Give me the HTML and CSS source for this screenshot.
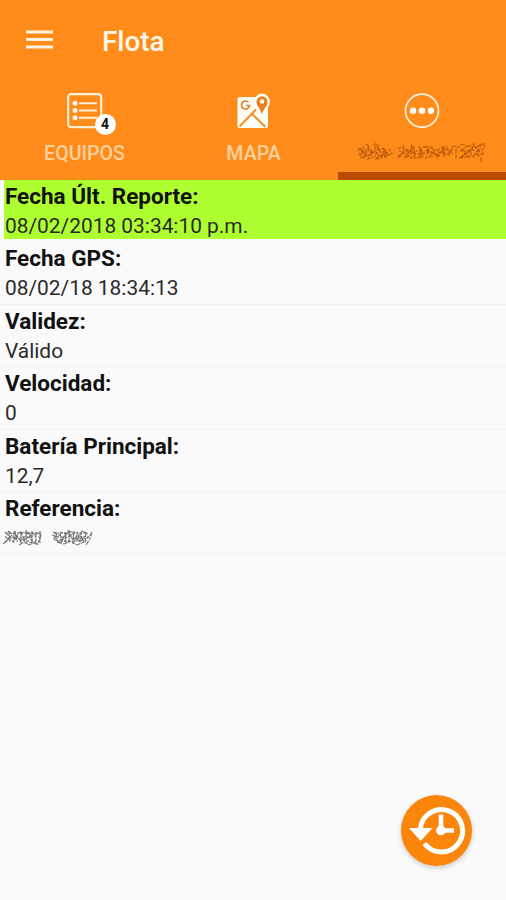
FILE: index.html
```html
<!DOCTYPE html>
<html lang="es">
<head>
  <meta charset="UTF-8">
  <meta name="viewport" content="width=device-width, initial-scale=1.0">
  <title>Flota</title>
  <link rel="stylesheet" href="styles.css">
</head>
<body>
  <header>
    <div class="toolbar">
      <svg class="menu" width="27" height="20" viewBox="0 0 27 20">
        <path d="M0 2h27M0 9.5h27M0 17h27" stroke="#fff5df" stroke-width="3.2"/>
      </svg>
      <h1>Flota</h1>
    </div>

    <nav class="tabs">
      <a class="tab">
        <span class="icon">
          <svg width="36" height="36" viewBox="0 0 36 36">
            <rect x="1.2" y="1.2" width="33" height="33" rx="3" fill="none" stroke="#fff0d4" stroke-width="2.2"/>
            <g fill="#fff5e2">
              <circle cx="8" cy="10.3" r="2.5"/>
              <circle cx="8" cy="17.5" r="2.5"/>
              <circle cx="8" cy="24.7" r="2.5"/>
            </g>
            <path d="M12 10.3h18M12 17.5h18M12 24.7h18" stroke="#fff0d4" stroke-width="2"/>
          </svg>
          <span class="badge">4</span>
        </span>
        <span class="tab-label">EQUIPOS</span>
      </a>
      <a class="tab">
        <span class="icon">
          <svg width="36" height="36" viewBox="0 0 36 36">
            <rect x="1.5" y="4" width="30.5" height="31" rx="2" fill="#fffdf5"/>
            <path d="M3.5 33.5L20 16.5M15.5 20.5L29.5 34" fill="none" stroke="#ee9030" stroke-width="2"/>
            <path d="M12.5 9.3a4 4 0 1 0 1 3.2H9.8" fill="none" stroke="#d8852e" stroke-width="1.7"/>
            <path d="M26 24C23 18 18.2 14.5 18.2 8.4a7.8 7.8 0 0 1 15.6 0C33.8 14.5 29 18 26 24z" fill="#fffdf5"/>
            <path d="M26 21.5C24.5 15.5 20.5 13.5 20.5 8.8a5.5 5.5 0 0 1 11 0C31.5 13.5 27.5 15.5 26 21.5z" fill="#e87f1c"/>
            <circle cx="26" cy="8.5" r="2.2" fill="#fffdf5"/>
          </svg>
        </span>
        <span class="tab-label">MAPA</span>
      </a>
      <a class="tab active">
        <span class="icon">
          <svg width="36" height="36" viewBox="0 0 36 36">
            <circle cx="18" cy="17.7" r="16.5" fill="none" stroke="#fff0d8" stroke-width="1.7"/>
            <circle cx="9" cy="17.7" r="3.2" fill="#fff"/>
            <circle cx="18" cy="17.7" r="3.2" fill="#fff"/>
            <circle cx="27" cy="17.7" r="3.2" fill="#fff"/>
          </svg>
        </span>
        <!-- nombre del equipo tachado -->
        <svg class="scribble-tab" width="132" height="26" viewBox="0 0 132 26">
          <g fill="none" stroke="#b95208" stroke-width="1.3" stroke-dasharray="5 1.3 3 1" opacity="0.75">
            <path d="M2 12l5-4 3 5-6 3 4 3 5-8-1-4 5 7-5 6 7-2 3-9 3 4-5 7 6-1 2-9 3 9-6-2M10 5l3 2M24 7l-4-2 6 11 4-6"/>
            <path d="M5 10l4 8M14 15l6-6M21 19l9-5M27 9l5 8 4-3-3-4M4 19l10-3M18 5l2 4"/>
            <path d="M42 10l6-3-2 9-4 3 8-9 4 2-4 7 6-5 1-6 3 8-6 3 9 0 2-10 2 9-5 1"/>
            <path d="M68 8l7 0-4 5 6 4-7 2 4-10M76 8l5 10 2-8-7 3 6 4 6-9 0 9 5-3-2-6-5 4 7 4 4-9-3 9M96 7l7 1-3 2 0 9"/>
            <path d="M48 19l5-8M55 6l3 12M63 7l3 11M64 15l8-4M86 7l2 10"/>
            <path d="M104 5l7 2-6 5 8 0-8 7 9-2-3 3M111 8l7-3-4 8 4 6M117 6l5 4-4 7M120 9l5-4-3 13M125 5l4 2-3 5 2 4M103 19l9-6M119 15l6 1M127 4l2 1M125 18l0 5"/>
          </g>
          <g fill="none" stroke="#8f4310" stroke-width="1.2" stroke-dasharray="2 2.5" opacity="0.65">
            <path d="M3 15l8-5 5 4 9-5 8 7M43 12l8 3 6-7 8 8 9-4 8 6 9-8 6 5M105 10l6 7 7-10 8 9"/>
            <path d="M2 9l9 8 8-4 8 5 6-6M42 17l10-6 9 5 7-8 9 7 8-2M106 18l9-8 9 4"/>
          </g>
        </svg>
      </a>
    </nav>
  </header>

  <main>
    <dl class="item reported">
      <dt>Fecha Últ. Reporte:</dt>
      <dd>08/02/2018 03:34:10 p.m.</dd>
    </dl>
    <dl class="item">
      <dt>Fecha GPS:</dt>
      <dd>08/02/18 18:34:13</dd>
    </dl>
    <dl class="item">
      <dt>Validez:</dt>
      <dd>Válido</dd>
    </dl>
    <dl class="item">
      <dt>Velocidad:</dt>
      <dd>0</dd>
    </dl>
    <dl class="item">
      <dt>Batería Principal:</dt>
      <dd>12,7</dd>
    </dl>
    <dl class="item">
      <dt>Referencia:</dt>
      <dd>
        <svg class="scribble-ref" width="90" height="22" viewBox="0 0 90 22">
          <g fill="none" stroke="#333" stroke-width="1.1" stroke-dasharray="5 1.2 3 1" opacity="0.65">
            <path d="M2 5l5 5-5 6 9-10 0 9-7-4 10 0-3-7 7 11 0-11-7 8 10 0-3-6 7-1-5 9 8-6-6-3 11 2-7 4 7 6 0-12 5 3-3 9-9-2M0 17l4-4M16 18l5-3 5 3 7-3M5 4l5 4"/>
            <path d="M50 5l7 3-7 4 9 4-2-11 7 2-7 6 9 2 0-11-7 9 13-7-7-2 6 11 4-10 1 9-6-3 9 1-1-8 6 2-6 8 8-4 3-5-2 7-4 6M54 15l7 2 6-3 7 4 9-4M49 8l6 2"/>
            <path d="M6 4l0 10M12 4l1 9M23 3l1 14M29 4l0 13M37 4l0 12M53 5l1 9M62 5l1 12M71 4l-1 13M77 6l0 11M83 5l-1 11"/>
          </g>
          <path d="M3 6h35M2 10h36M6 14h32M51 6h34M51 10h35M54 14h30" fill="none" stroke="#555" stroke-width="2" stroke-dasharray="1.5 2.2" opacity="0.5"/>
        </svg>
      </dd>
    </dl>
  </main>

  <button class="fab">
    <svg width="71" height="71" viewBox="0 0 71 71">
      <path d="M19.3 34A21.2 21.2 0 1 1 23.5 48.5" fill="none" stroke="#fff" stroke-width="5"/>
      <path d="M8 33h23.5L19.7 46z" fill="#fff"/>
      <path d="M40 19.5v16H53" fill="none" stroke="#fff" stroke-width="4.6"/>
      <circle cx="40" cy="35.5" r="4.8" fill="#fff"/>
    </svg>
  </button>
</body>
</html>
```
FILE: styles.css
```css
* {
  box-sizing: border-box;
}

body {
  font-family: Roboto, "Liberation Sans", sans-serif;
  margin: 0;
  height: 900px;
  overflow: hidden;
  background-color: #fafafa;
  color: #111;
}

header {
  height: 180px;
  background-color: #ff8c1a;
}

.toolbar {
  display: flex;
  align-items: center;
  height: 83px;
  padding-left: 26px;
}

.menu {
  margin-right: 49px;
  margin-top: -3px;
}

h1 {
  margin: 0;
  font-size: 27.8px;
  font-weight: 500;
  color: #fff8e8;
}

/* Pestañas */
.tabs {
  display: grid;
  grid-template-columns: 169px 169px 168px;
  height: 97px;
}

.tab {
  display: flex;
  flex-direction: column;
  align-items: center;
  padding-top: 10px;
  border-bottom: 8px solid transparent;
}

.tab.active {
  border-bottom-color: #b94b00;
}

.icon {
  position: relative;
  height: 36px;
}

.icon svg {
  display: block;
}

.badge {
  position: absolute;
  left: 28px;
  top: 21px;
  width: 21px;
  height: 21px;
  border-radius: 50%;
  background-color: #fff;
  color: #111;
  font-size: 14px;
  font-weight: bold;
  line-height: 21px;
  text-align: center;
}

.tab-label {
  margin-top: 13px;
  font-size: 19.6px;
  font-weight: 500;
  line-height: 24px;
  color: #ffd09a;
}

.scribble-tab {
  margin-top: 10px;
}

/* Datos del equipo */
.item {
  height: 62.4px;
  margin: 0;
  padding: 1px 0 0 5px;
  border-bottom: 1px solid #f2f2f2;
}

.reported {
  height: 59px;
  margin: 0 0 3.4px 4px;
  padding-left: 1px;
  border-bottom: none;
  background-color: #adff2f;
}

dt {
  font-size: 22.5px;
  font-weight: bold;
  line-height: 30px;
}

dd {
  margin: 0;
  font-size: 20.9px;
  line-height: 31px;
  color: #2a2a2a;
}

.scribble-ref {
  display: block;
  margin: 4px 0 0 -2px;
}

.fab {
  position: absolute;
  left: 401px;
  top: 795px;
  width: 71px;
  height: 71px;
  padding: 0;
  border: none;
  border-radius: 50%;
  background-color: #fb860b;
  box-shadow: 0 2px 5px rgba(0, 0, 0, 0.2);
}

.fab svg {
  display: block;
}
```
